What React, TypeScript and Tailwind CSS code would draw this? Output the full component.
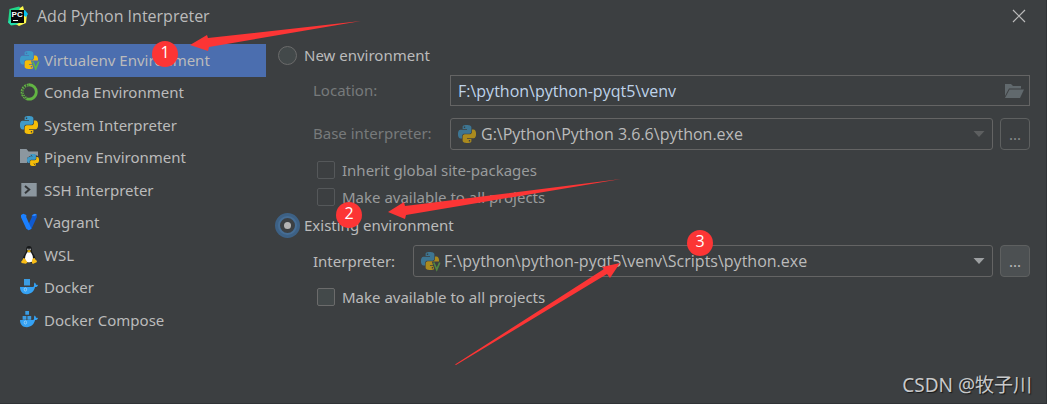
import { useState, type ReactNode } from 'react';

const SNAKE =
  'M14.25.18l.9.2.73.26.59.3.45.32.34.34.25.34.16.33.1.3.04.26.02.2-.01.13V8.5l-.05.63-.13.55-.21.46-.26.38-.3.31-.33.25-.35.19-.35.14-.33.1-.3.07-.26.04-.21.02H8.77l-.69.05-.59.14-.5.22-.41.27-.33.32-.27.35-.2.36-.15.37-.1.35-.07.32-.04.27-.02.21v3.06H3.17l-.21-.03-.28-.07-.32-.12-.35-.18-.36-.26-.36-.36-.35-.46-.32-.59-.28-.73-.21-.88-.14-1.05-.05-1.23.06-1.22.16-1.04.24-.87.32-.71.36-.57.4-.44.42-.33.42-.24.4-.16.36-.1.32-.05.24-.01h.16l.06.01h8.16v-.83H6.18l-.01-2.75-.02-.37.05-.34.11-.31.17-.28.25-.26.31-.23.38-.2.44-.18.51-.15.58-.12.64-.1.71-.06.77-.04.84-.02 1.27.05zm-6.3 1.98l-.23.33-.08.41.08.41.23.34.33.22.41.09.41-.09.33-.22.23-.34.08-.41-.08-.41-.23-.33-.33-.22-.41-.09-.41.09z';

function Snakes() {
  return (
    <>
      <path d={SNAKE} fill="#3e9ac8" />
      <path d={SNAKE} fill="#f4bd08" transform="rotate(180 12 12)" />
    </>
  );
}

function PythonIcon() {
  return (
    <svg viewBox="0 0 24 24" className="size-[18px] shrink-0" aria-hidden="true">
      <Snakes />
    </svg>
  );
}

function VirtualenvIcon({ back = '#3c3f41' }: { back?: string }) {
  return (
    <svg viewBox="0 0 24 24" className="size-[18px] shrink-0 overflow-visible" aria-hidden="true">
      <Snakes />
      <path d="M14.5 12.500h12v13h-8z" fill={back} />
      <path d="M17 14l4 9.500 4-9.500" fill="none" stroke="#62b543" strokeWidth="2.300" />
    </svg>
  );
}

function CondaIcon() {
  return (
    <svg viewBox="0 0 18 18" className="size-[18px] shrink-0" aria-hidden="true" fill="none" stroke="#62b543">
      <path d="M8.5 1.8A7.200 7.200 0 1 1 6.500 15.700" strokeWidth="2.800" />
      <path d="M8.5 1.2A7.8 7.8 0 0 0 6.500 16.300" strokeWidth="1.4" strokeDasharray="1.9 .9" />
      <path d="M8.5 2.800A6.200 6.200 0 0 0 7 14.800" strokeWidth="1.4" strokeDasharray="1.4 1" />
    </svg>
  );
}

function PipenvIcon() {
  return (
    <svg viewBox="0 0 18 18" className="size-[18px] shrink-0 overflow-visible" aria-hidden="true">
      <path d="M0 1h6.5l2 2.5H18V8l-5-2-6 4v5H0z" fill="#8c979f" />
      <g transform="translate(7 6) scale(.5)">
        <Snakes />
      </g>
    </svg>
  );
}

function SshIcon() {
  return (
    <svg viewBox="0 0 18 18" className="size-[18px] shrink-0" aria-hidden="true">
      <path d="M1.3 2h15.4v13.5H1.3z" fill="#8c979f" />
      <path d="M5 5l4.2 3.6L5 12.2" fill="none" stroke="#333638" strokeWidth="2" />
    </svg>
  );
}

function VagrantIcon() {
  return (
    <svg viewBox="0 0 18 18" className="size-[18px] shrink-0" aria-hidden="true">
      <path d="M11.8 2.2L15 .8l1.8 1v2.4l-5.3 11.5-2.8 1.6-.7-5 3.8-8z" fill="#105ad0" />
      <path d="M1 2L3.3.8 6.3 2v2.2l3 6.8 2.2 4.7-2.8 1.6-2.4-1.5L1 4.2z" fill="#1b80ff" />
      <path d="M11.8 2.2L15 .8l1.8 1-2.6 1.4z" fill="#2e8cff" />
    </svg>
  );
}

function LinuxIcon() {
  return (
    <svg viewBox="0 0 18 18" className="size-[18px] shrink-0" aria-hidden="true">
      <path d="M6.2 3c0-1.8 1-3 2.8-3s2.8 1.2 2.8 3c0 2.6.6 3.5 1.8 5.2 1.2 1.8 2 4 1.8 6.2L12 17H6l-3.2-2.6C2.600 12 3.600 9.600 4.800 8 6 6.200 6.200 5.600 6.200 3z" fill="#17191a" />
      <path d="M7.200 6.200h3.600c1.800 2.600 2.600 5 2 8-.4 1.600-2 2.200-3.800 2.200s-3.400-.6-3.800-2.200c-.6-3 .4-5.400 2-8z" fill="#fff" />
      <circle cx="7.900" cy="3.400" r=".8" fill="#b5b8ba" />
      <circle cx="10.100" cy="3.400" r=".8" fill="#b5b8ba" />
      <path d="M6.800 4.900L9 4l2.200.9L9 6.500z" fill="#f4bd08" />
      <path d="M3.400 12l1.500.4 2.600 4.100-1.700 1.300-4.300-.9-.3-1.500 1-.9zM14.600 12l-2 .5-.8 4.100 1 1.300 3.800-1.700.4-1.200-1.400-1.200z" fill="#f9bd16" />
    </svg>
  );
}

function DockerIcon({ compose = false }: { compose?: boolean }) {
  return (
    <svg viewBox="0 0 18 18" className="size-[18px] shrink-0" aria-hidden="true">
      {compose ? (
        <path d="M5.300 0h3.700v3.800H5.300zM2.600 5h3.800v3.800H2.600zM7.400 5h3.800v3.800H7.400z" fill="#3b9ce2" />
      ) : (
        <path d="M4 1h6v6.500H4z" fill="#3b9ce2" />
      )}
      <path d="M0 9h13.200c.9-.4 1-1.300.8-2.400-.1-1 .1-1.700.7-2.200.9.7 1.300 1.500 1.300 2.500.8-.1 1.500 0 2 .4-.5 1.300-1.500 1.800-2.900 1.800C14 13.500 11 16.200 6.800 16.200 2.700 16.200 0 13.700 0 9z" fill="#35a2f4" />
      <ellipse cx="5.400" cy="11.500" rx="1.200" ry="1.600" fill="#35a2f4" stroke="#a9d5f4" strokeWidth=".8" />
    </svg>
  );
}

function PyCharmIcon() {
  return (
    <svg viewBox="0 0 20 20" className="size-5 shrink-0" aria-hidden="true">
      <path d="M1.500 3L11 .5l3 3-4 15-7 1-3-3z" fill="#21d789" />
      <path d="M12 2l3-2 1 4 3 4-1 9-7 3-5-3z" fill="#fcf84a" />
      <path d="M15 5l2-1 3 4-2 3-3-2z" fill="#07c3f2" />
      <path d="M0 16l3-3 8 5-8 1z" fill="#25ddb0" />
      <path d="M3 4h13v13H3z" fill="#080808" />
      <text x="3.600" y="11" fontSize="8" fontWeight="700" fill="#fff" fontFamily="Liberation Sans, sans-serif">PC</text>
      <path d="M5 14h5v1H5z" fill="#fff" />
    </svg>
  );
}

const ITEMS: { name: string; icon: ReactNode }[] = [
  { name: 'Virtualenv Environment', icon: <VirtualenvIcon back="#4b6eaf" /> },
  { name: 'Conda Environment', icon: <CondaIcon /> },
  { name: 'System Interpreter', icon: <PythonIcon /> },
  { name: 'Pipenv Environment', icon: <PipenvIcon /> },
  { name: 'SSH Interpreter', icon: <SshIcon /> },
  { name: 'Vagrant', icon: <VagrantIcon /> },
  { name: 'WSL', icon: <LinuxIcon /> },
  { name: 'Docker', icon: <DockerIcon /> },
  { name: 'Docker Compose', icon: <DockerIcon compose /> },
];

function Radio({ label, checked, onSelect }: { label: string; checked: boolean; onSelect: () => void }) {
  return (
    <label className="flex h-6 items-center gap-[7px]">
      <span className="grid size-5 place-items-center">
        <input
          type="radio"
          name="environment"
          checked={checked}
          onChange={onSelect}
          className="col-start-1 row-start-1 size-[19px] appearance-none rounded-full border border-[#6b6b6b] bg-[#43494a] outline-none checked:border-2 checked:border-[#466d94] checked:bg-[#3c4043] checked:ring-3 checked:ring-[#3d6185]"
        />
        {checked && <span className="pointer-events-none col-start-1 row-start-1 size-[7px] rounded-full bg-[#b4b4b4]" />}
      </span>
      {label}
    </label>
  );
}

function Check({ label, dim = false }: { label: string; dim?: boolean }) {
  return (
    <label className={dim ? 'flex h-[27px] items-center gap-[7px] text-[#999b9c]' : 'flex h-[27px] items-center gap-[7px]'}>
      <input
        type="checkbox"
        disabled={dim}
        className="size-[18px] appearance-none rounded-[2px] border border-[#6b6b6b] bg-[#43494a] checked:bg-[#4b6eaf] disabled:border-[#55585a] disabled:bg-[#3c3f41]"
      />
      {label}
    </label>
  );
}

function Combo({ id, value, icon, dim = false }: { id: string; value: string; icon: ReactNode; dim?: boolean }) {
  return (
    <div className="relative min-w-0 flex-1">
      <select id={id} className="h-8 w-full appearance-none rounded-[3px] border border-[#646464] bg-[#3c3f41] pr-8 pl-[30px] font-['Open_Sans',sans-serif] text-[16px] outline-none">
        <option>{value}</option>
      </select>
      <span className="pointer-events-none absolute inset-y-0 left-2 flex items-center opacity-60">{icon}</span>
      <svg viewBox="0 0 12 6" aria-hidden="true" className={dim ? 'pointer-events-none absolute top-[13px] right-2 h-[6px] w-3 text-[#5d5f60]' : 'pointer-events-none absolute top-[13px] right-2 h-[6px] w-3 text-[#9da0a2]'}>
        <path d="M.5 0h11L6 6z" fill="currentColor" />
      </svg>
    </div>
  );
}

function Badge({ n, place }: { n: number; place: string }) {
  return (
    <span className={`absolute flex size-[26px] items-center justify-center rounded-full bg-[#fc3535] pb-1 font-['Open_Sans',sans-serif] text-[16px] text-white ${place}`}>{n}</span>
  );
}

export default function App() {
  const [active, setActive] = useState(0);
  const [mode, setMode] = useState('existing');

  return (
    <div className="relative min-h-screen overflow-hidden border-r border-b border-[#303336] bg-[#3c3f41] font-['Noto_Sans','Noto_Sans_CJK_SC',sans-serif] text-[15px] leading-5 text-[#bbbbbb]">
      <header className="flex h-8 items-center gap-[9px] pr-[19px] pl-2">
        <PyCharmIcon />
        <h1 className="flex-1 font-['Open_Sans',sans-serif] text-[16px]">Add Python Interpreter</h1>
        <button aria-label="Close" className="flex size-4 items-center justify-center">
          <svg viewBox="0 0 14 14" className="size-[14px]" aria-hidden="true">
            <path d="M1 1l12 12M13 1L1 13" stroke="#bbbbbb" strokeWidth="1.200" />
          </svg>
        </button>
      </header>

      <main className="flex gap-[11px] pr-4 pl-[14px]">
        <nav className="w-[252px] shrink-0 pt-3">
          <ul>
            {ITEMS.map((item, i) => (
              <li key={item.name} className="odd:h-[33px] even:h-8">
                <button
                  onClick={() => setActive(i)}
                  className={active === i ? 'flex size-full items-center gap-[6px] bg-[#4b6eaf] pb-[2px] pl-[6px] text-left' : 'flex size-full items-center gap-[6px] pb-[2px] pl-[6px] text-left'}
                >
                  {item.icon}
                  {item.name}
                </button>
              </li>
            ))}
          </ul>
        </nav>

        <form className="min-w-0 flex-1 pt-[11px]">
          <Radio label="New environment" checked={mode === 'new'} onSelect={() => setMode('new')} />
          <div className="mt-2 flex items-center pl-9 text-[#777a7b]">
            <label htmlFor="location" className="w-[137px] shrink-0 pb-[2px]">Location:</label>
            <div className="relative min-w-0 flex-1">
              <input id="location" defaultValue="F:\python\python-pyqt5\venv" className="h-[31px] w-full border border-[#646464] bg-[#3c3f41] pr-9 pl-[7px] font-['Open_Sans',sans-serif] text-[16px] text-[#bfd3ea] outline-none" />
              <button type="button" aria-label="Browse" className="absolute top-2 right-[6px]">
                <svg viewBox="0 0 20 16" className="h-4 w-5" aria-hidden="true" fill="#61696d">
                  <path d="M1 1h6l2 2h8v2.500H5L1 13z" />
                  <path d="M5.500 6.500H20L16 15H1z" />
                </svg>
              </button>
            </div>
          </div>
          <div className="mt-3 flex items-center pl-9">
            <label htmlFor="base" className="w-[137px] shrink-0 pb-[2px] text-[#777a7b]">Base interpreter:</label>
            <Combo id="base" value="G:\Python\Python 3.6.6\python.exe" icon={<PythonIcon />} dim />
            <button type="button" aria-label="Browse base interpreter" className="ml-[7px] h-8 w-[30px] rounded-[4px] border border-[#5e6060] text-[#888b8c]">...</button>
          </div>
          <div className="mt-[6px] pl-10">
            <Check label="Inherit global site-packages" dim />
            <Check label="Make available to all projects" dim />
          </div>
          <div className="mt-[3px]">
            <Radio label="Existing environment" checked={mode === 'existing'} onSelect={() => setMode('existing')} />
          </div>
          <div className="mt-2 flex items-center pl-9">
            <label htmlFor="interpreter" className="w-[100px] shrink-0">Interpreter:</label>
            <Combo id="interpreter" value="F:\python\python-pyqt5\venv\Scripts\python.exe" icon={<VirtualenvIcon />} />
            <button type="button" aria-label="Browse interpreter" className="ml-[7px] h-8 w-[30px] rounded-[4px] border border-[#5e6060] bg-[#4c5052]">...</button>
          </div>
          <div className="mt-[6px] pl-10">
            <Check label="Make available to all projects" />
          </div>
        </form>
      </main>

      <div className="pointer-events-none absolute top-0 left-0">
        <svg viewBox="0 0 1047 404" className="h-[404px] w-[1047px]" aria-hidden="true" fill="#fc3535">
          <path d="M361 21L208 38l-1-3-17 10 18 6 1-4z" />
          <path d="M621 179L405 206l-1-4-16 10 17 7 1-4z" />
          <path d="M455 364.500L604 269l-2-2 18-4-10 15-3-4L456 365z" />
        </svg>
        <Badge n={1} place="top-[41px] left-[152px]" />
        <Badge n={2} place="top-[202px] left-[336px]" />
        <Badge n={3} place="top-[230px] left-[687px]" />
      </div>
      <p className="pointer-events-none absolute right-[14px] bottom-1 text-[19px] leading-7 text-[#c8c9ca] [text-shadow:1px_1px_1px_#17191a]">CSDN @牧子川</p>
    </div>
  );
}
